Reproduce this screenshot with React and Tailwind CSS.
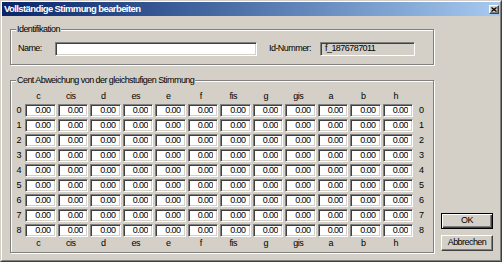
import React from 'react';

const notes = ['c', 'cis', 'd', 'es', 'e', 'f', 'fis', 'g', 'gis', 'a', 'b', 'h'];
const octaves = [0, 1, 2, 3, 4, 5, 6, 7, 8];

const sunken =
  'border border-t-[#808080] border-l-[#808080] border-r-white border-b-white shadow-[inset_1px_1px_0_#404040,inset_-1px_-1px_0_#d4d0c8] outline-none';

const GroupBox = ({ title, className, children }) => (
  <fieldset
    className={`border border-[#808080] shadow-[1px_1px_0_#fff,inset_1px_1px_0_#fff] ${className}`}
  >
    <legend className="ml-[5px] px-[1px] h-[12px] leading-[12px] bg-[#d4d0c8]">{title}</legend>
    {children}
  </fieldset>
);

const NoteHeader = () => (
  <div className="grid grid-cols-[12px_repeat(12,30.5px)_1fr] gap-x-[2px] h-[12px] leading-[12px]">
    <span />
    {notes.map((n) => (
      <span key={n} className="text-center pr-[4px]">
        {n}
      </span>
    ))}
    <span />
  </div>
);

const CentRow = ({ octave }) => (
  <div className="grid grid-cols-[12px_repeat(12,30.5px)_1fr] gap-x-[2px] h-[13px] items-center">
    <span className="text-right pr-[2px]">{octave}</span>
    {notes.map((n) => (
      <input
        key={n}
        readOnly
        defaultValue="0.00"
        className={`w-full h-[13px] bg-white text-right pr-[4px] ${sunken}`}
      />
    ))}
    <span className="pl-[4px]">{octave}</span>
  </div>
);

const App = () => {
  return (
    <div className="w-[502px] h-[262px] border border-t-[#d4d0c8] border-l-[#d4d0c8] border-r-[#404040] border-b-[#404040] font-['Liberation_Sans',Arial,sans-serif] text-[9px] tracking-[-0.55px] text-black select-none">
      <div className="h-full flex flex-col bg-[#d4d0c8] border border-t-white border-l-white border-r-[#808080] border-b-[#808080]">
        {/* title bar */}
        <div className="flex items-center h-[14px] pl-[2px] pr-[1px] bg-linear-to-r from-[#0a246a] to-[#a6caf0]">
          <span className="flex-1 font-bold text-white text-[9.5px] tracking-[-0.6px]">Vollständige Stimmung bearbeiten</span>
          <div className="w-[10px] h-[9px] flex items-center justify-center bg-[#d4d0c8] border border-t-white border-l-white border-r-[#404040] border-b-[#404040] shadow-[inset_-1px_-1px_0_#808080]">
            <svg width="6" height="5" viewBox="0 0 6 5">
              <path d="M0.5 0.5 L5.5 4.5 M5.5 0.5 L0.5 4.5" stroke="#000" strokeWidth="1.3" />
            </svg>
          </div>
        </div>

        <div className="flex pl-[8px] pt-[7px]">
          <div className="flex flex-col w-[424px]">
            <GroupBox title="Identifikation" className="h-[42px]">
              <div className="flex items-center h-[14px] mt-[7px] pl-[7px]">
                <span className="w-[37px]">Name:</span>
                <input className={`w-[202px] h-[14px] bg-white px-[2px] ${sunken}`} defaultValue="" />
                <span className="ml-[12px] w-[51px]">Id-Nummer:</span>
                <div className={`w-[95px] h-[14px] flex items-center pl-[4px] bg-[#d4d0c8] ${sunken}`}>
                  f_1876787011
                </div>
              </div>
            </GroupBox>

            <GroupBox title="Cent Abweichung von der gleichstufigen Stimmung" className="mt-[9px] h-[179px]">
              <div className="flex flex-col pt-[4px]">
                <NoteHeader />
                <div className="flex flex-col gap-[2px] mt-[2px]">
                  {octaves.map((o) => (
                    <CentRow key={o} octave={o} />
                  ))}
                </div>
                <div className="h-[11px] leading-[11px]">
                  <NoteHeader />
                </div>
              </div>
            </GroupBox>
          </div>

          <div className="ml-[7px] w-[52px] flex flex-col justify-end gap-[6px] pb-[2px]">
            <button className="h-[16px] flex items-center justify-center border border-black shadow-[inset_1px_1px_0_#fff,inset_-1px_-1px_0_#404040,inset_-2px_-2px_0_#808080]">
              OK
            </button>
            <button className="h-[16px] flex items-center justify-center border border-t-white border-l-white border-r-[#404040] border-b-[#404040] shadow-[inset_-1px_-1px_0_#808080]">
              Abbrechen
            </button>
          </div>
        </div>
      </div>
    </div>
  );
};

export default App;
